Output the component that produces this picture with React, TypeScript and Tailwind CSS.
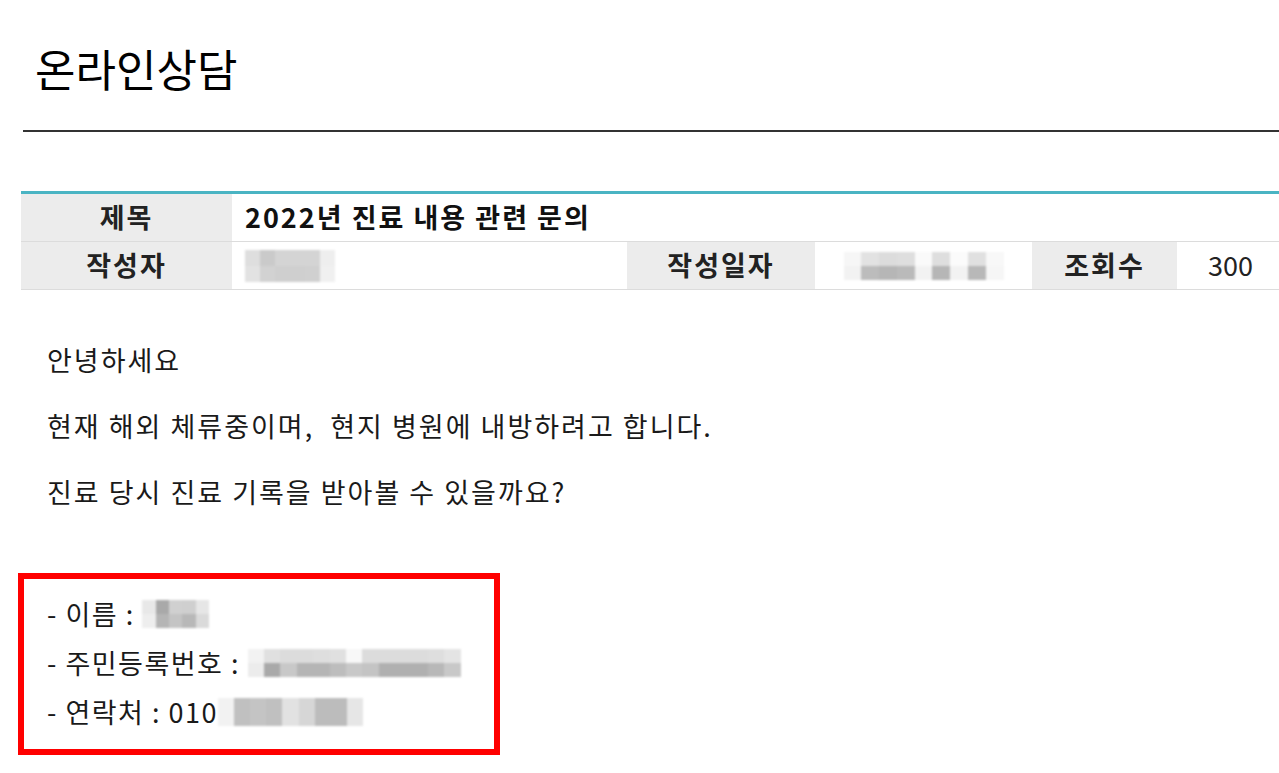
type MosaicProps = {
  rows: string[][]
  className?: string
}

// pixelated blur block used to hide personal data
function Mosaic({ rows, className = '' }: MosaicProps) {
  return (
    <div className={`flex flex-col blur-[1px] ${className}`}>
      {rows.map((row, i) => (
        <div key={i} className="flex flex-1">
          {row.map((cell, j) => (
            <div key={j} className={`flex-1 ${cell}`} />
          ))}
        </div>
      ))}
    </div>
  )
}

const authorRows = [
  ['bg-[#dedede]', 'bg-[#cacaca]', 'bg-[#d4d4d4]', 'bg-[#d4d4d4]', 'bg-[#d4d4d4]', 'bg-[#eeeeee]'],
  ['bg-[#e2e2e2]', 'bg-[#d2d2d2]', 'bg-[#cfcfcf]', 'bg-[#cfcfcf]', 'bg-[#d0d0d0]', 'bg-[#f0f0f0]'],
]

const dateRows = [
  ['bg-[#f6f6f6]', 'bg-[#e2e2e2]', 'bg-[#dcdcdc]', 'bg-[#dedede]', 'bg-[#fafafa]', 'bg-[#dedede]', 'bg-[#fbfbfb]', 'bg-[#e0e0e0]', 'bg-[#f8f8f8]'],
  ['bg-[#f2f2f2]', 'bg-[#bcbcbc]', 'bg-[#b6b6b6]', 'bg-[#bababa]', 'bg-[#f2f2f2]', 'bg-[#b6b6b6]', 'bg-[#f2f2f2]', 'bg-[#b8b8b8]', 'bg-[#f6f6f6]'],
]

const nameRows = [
  ['bg-[#e8e8e8]', 'bg-[#a9a9a9]', 'bg-[#d0d0d0]', 'bg-[#cfcfcf]', 'bg-[#e6e6e6]'],
  ['bg-[#eeeeee]', 'bg-[#b5b5b5]', 'bg-[#c4c4c4]', 'bg-[#b8b8b8]', 'bg-[#dadada]'],
]

const rrnRows = [
  ['bg-[#f2f2f2]', 'bg-[#e0e0e0]', 'bg-[#dcdcdc]', 'bg-[#dcdcdc]', 'bg-[#dedede]', 'bg-[#e0e0e0]', 'bg-[#f8f8f8]', 'bg-[#dcdcdc]', 'bg-[#dcdcdc]', 'bg-[#dcdcdc]', 'bg-[#dcdcdc]', 'bg-[#dedede]', 'bg-[#e4e4e4]'],
  ['bg-[#ececec]', 'bg-[#a9a9a9]', 'bg-[#c8c8c8]', 'bg-[#b5b5b5]', 'bg-[#b5b5b5]', 'bg-[#bdbdbd]', 'bg-[#c8c8c8]', 'bg-[#c4c4c4]', 'bg-[#b0b0b0]', 'bg-[#b0b0b0]', 'bg-[#b0b0b0]', 'bg-[#b8b8b8]', 'bg-[#c8c8c8]'],
]

const phoneRows = [
  ['bg-[#f2f2f2]', 'bg-[#c0c0c0]', 'bg-[#c4c4c4]', 'bg-[#c0c0c0]', 'bg-[#e2e2e2]', 'bg-[#d6d6d6]', 'bg-[#bcbcbc]', 'bg-[#bcbcbc]', 'bg-[#e6e6e6]'],
]

export default function App() {
  return (
    <div className="w-[1279px] h-[773px] overflow-hidden bg-white text-[#222] font-['Noto_Sans_CJK_KR','Liberation_Sans',sans-serif]">
      {/* Page title */}
      <h1 className="pt-[44px] pl-[35px] text-[44px] leading-[48px] font-normal tracking-[0px] text-black">
        온라인상담
      </h1>
      <div className="mt-[38px] ml-[23px] h-[2px] bg-[#333]" />

      {/* Post info table */}
      <div className="mt-[59px] ml-[21px] border-t-[3px] border-[#4ab4c3] text-[27px] tracking-[2px]">
        <div className="flex h-[48px] border-b border-[#dcdcdc]">
          <div className="w-[211px] flex items-center justify-center bg-[#ececec] font-bold">
            제목
          </div>
          <div className="flex-1 flex items-center pl-[13px] font-bold text-[#111]">
            2022년 진료 내용 관련 문의
          </div>
        </div>
        <div className="flex h-[48px] border-b border-[#dcdcdc]">
          <div className="w-[211px] flex items-center justify-center bg-[#ececec] font-bold">
            작성자
          </div>
          <div className="w-[395px] flex items-center pl-[13px]">
            <Mosaic rows={authorRows} className="w-[90px] h-[32px]" />
          </div>
          <div className="w-[188px] flex items-center justify-center bg-[#ececec] font-bold">
            작성일자
          </div>
          <div className="w-[217px] flex items-center justify-center">
            <Mosaic rows={dateRows} className="w-[160px] h-[28px]" />
          </div>
          <div className="w-[145px] flex items-center justify-center bg-[#ececec] font-bold">
            조회수
          </div>
          <div className="flex-1 flex items-center pl-[31px] tracking-normal">300</div>
        </div>
      </div>

      {/* Body */}
      <div className="mt-[37px] pl-[47px] text-[27px] leading-[66px] tracking-[2px] text-[#1a1a1a]">
        <p>안녕하세요</p>
        <p className="whitespace-pre">현재 해외 체류중이며,  현지 병원에 내방하려고 합니다.</p>
        <p>진료 당시 진료 기록을 받아볼 수 있을까요?</p>
      </div>

      {/* Highlighted personal info */}
      <div className="mt-[48px] ml-[18px] w-[482px] border-[6px] border-[#ff0000] pt-[10px] pb-[13px] pl-[23px] text-[27px] leading-[49px] tracking-[1.5px] text-[#1a1a1a]">
        <div className="flex items-center">
          <span className="whitespace-pre">- 이름 : </span>
          <Mosaic rows={nameRows} className="w-[67px] h-[28px]" />
        </div>
        <div className="flex items-center">
          <span className="whitespace-pre">- 주민등록번호 : </span>
          <Mosaic rows={rrnRows} className="w-[213px] h-[28px]" />
        </div>
        <div className="flex items-center">
          <span className="whitespace-pre">- 연락처 : 010</span>
          <Mosaic rows={phoneRows} className="w-[145px] h-[28px]" />
        </div>
      </div>
    </div>
  )
}
